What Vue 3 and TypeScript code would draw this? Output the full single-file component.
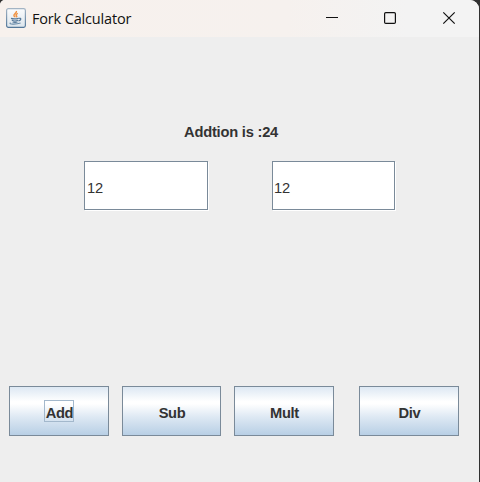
<script setup lang="ts">
import { ref } from 'vue'

type Operation = 'Add' | 'Sub' | 'Mult' | 'Div'

const first = ref('12')
const second = ref('12')
const result = ref('Addtion is :24')
const focused = ref<Operation>('Add')
const operations: Operation[] = ['Add', 'Sub', 'Mult', 'Div']

function calculate(operation: Operation): void {
  const a = Number(first.value)
  const b = Number(second.value)
  focused.value = operation
  if (operation === 'Add') result.value = `Addtion is :${a + b}`
  else if (operation === 'Sub') result.value = `Subtraction is :${a - b}`
  else if (operation === 'Mult') result.value = `Multiplication is :${a * b}`
  else result.value = `Division is :${a / b}`
}
</script>

<template>
  <main class="window">
    <header class="titlebar">
      <svg class="java" width="20" height="20" viewBox="0 0 20 20">
        <defs>
          <linearGradient id="tile" x1="0" y1="0" x2="0" y2="1">
            <stop offset="0" stop-color="#fbfcfd" />
            <stop offset="1" stop-color="#dce5ec" />
          </linearGradient>
          <linearGradient id="edge" x1="0" y1="0" x2="0" y2="1">
            <stop offset="0" stop-color="#a3b4c4" />
            <stop offset="1" stop-color="#54789a" />
          </linearGradient>
        </defs>
        <rect x=".6" y=".6" width="18.8" height="18.8" rx="1.8" fill="url(#tile)" stroke="url(#edge)" stroke-width="1.2" />
        <path d="M10.4 3c.8 2-3.4 3-2.4 4.7.3.7 1 1 1 1.6M11.8 5.4c-2.5 1-1.8 1.8-1.2 2.5.4.5.1 1-.3 1.4" fill="none" stroke="#ef9140" stroke-width="1.5" />
        <path d="M5 10.4c1.8.6 5.4.5 7.6 0M5.8 12.3c1.6.7 4.6.7 6.2 0M6.6 14c1.4.5 3.5.5 4.9 0M12.8 10.3c2.8-.5 2.6 1.8-.3 2.6" fill="none" stroke="#56799b" stroke-width="1.2" />
        <path d="M4.6 14.8c-2.6 1.5 5 1.9 10 .2" fill="none" stroke="#6c8dab" stroke-width="1.2" />
      </svg>
      <h1 class="title">Fork Calculator</h1>
      <nav class="controls">
        <button aria-label="Minimize">
          <svg width="14" height="14" viewBox="0 0 14 14"><path d="M1 6.5h12" /></svg>
        </button>
        <button aria-label="Maximize">
          <svg width="14" height="14" viewBox="0 0 14 14"><rect x="1.6" y="1.6" width="10.8" height="10.8" rx="1.2" /></svg>
        </button>
        <button aria-label="Close">
          <svg width="14" height="14" viewBox="0 0 14 14"><path d="M1.3 1.3l11.4 11.4M12.7 1.3L1.3 12.7" /></svg>
        </button>
      </nav>
    </header>
    <section class="content">
      <output class="result">{{ result }}</output>
      <div class="fields">
        <div class="field"><input v-model="first" aria-label="First number" /></div>
        <div class="field"><input v-model="second" aria-label="Second number" /></div>
      </div>
      <div class="actions">
        <button
          v-for="operation in operations"
          :key="operation"
          class="action"
          :class="[operation.toLowerCase(), { focused: focused === operation }]"
          @click="calculate(operation)"
        >
          <span>{{ operation }}</span>
        </button>
      </div>
    </section>
  </main>
</template>

<style>
body {
  background: #303030;
}
</style>

<style scoped>
.window {
  box-sizing: border-box;
  width: 479px;
  height: 482px;
  overflow: hidden;
  background: #eee;
  border-radius: 5px 9px 0 0;
  font-family: "Liberation Sans", Arial, sans-serif;
}
.titlebar {
  display: flex;
  align-items: center;
  height: 37px;
  padding-left: 6px;
  background: linear-gradient(90deg, #f7f1ed 0%, #f6f1ee 60%, #f3f3f3 85%);
}
.java {
  flex: none;
  margin-top: -2px;
}
.title {
  margin: 0 0 0 6px;
  font: 400 14.5px/20px "Open Sans", "Noto Sans", sans-serif;
  letter-spacing: -0.17px;
  color: #111;
  white-space: nowrap;
}
.controls {
  display: flex;
  margin: 0 1px 0 auto;
}
.controls button {
  display: flex;
  align-items: center;
  justify-content: center;
  width: 58.5px;
  height: 37px;
  padding: 0 0 1px;
  border: 0;
  background: none;
}
.controls svg {
  fill: none;
  stroke: #111;
  stroke-width: 1.2;
}
.content {
  display: flex;
  flex-direction: column;
  height: 445px;
  color: #333;
}
.result {
  margin: 85px 0 0 184px;
  font-size: 14.7px;
  font-weight: bold;
  line-height: 20px;
  letter-spacing: -0.22px;
  white-space: nowrap;
}
.fields {
  display: flex;
  gap: 64px;
  margin: 19px 0 0 84px;
}
.field {
  box-sizing: border-box;
  width: 124px;
  height: 49px;
  border: 1px solid #7a8a99;
  background: #fff;
  box-shadow: 1px 1px 0 #fff;
}
.field + .field {
  width: 123px;
}
.field input {
  box-sizing: border-box;
  width: 100%;
  height: 47px;
  padding: 4px 2px 0;
  border: 0;
  outline: 0;
  background: transparent;
  color: #333;
  font: 14.7px "Liberation Sans", Arial, sans-serif;
  letter-spacing: -0.2px;
}
.field + .field input {
  padding-left: 1px;
}
.actions {
  display: flex;
  margin: 176px 0 0 9px;
}
.action {
  display: flex;
  align-items: center;
  justify-content: center;
  box-sizing: border-box;
  width: 100px;
  height: 50px;
  padding: 0;
  border: 1px solid #7a8a99;
  background: linear-gradient(#dde8f3 0%, #fff 30%, #fff 35%, #dde8f3 63%, #b8cfe5 100%);
  color: #333;
  font: bold 14.7px/16px "Liberation Sans", Arial, sans-serif;
  letter-spacing: -0.35px;
}
.action.sub {
  width: 99px;
  margin-left: 13px;
}
.action.mult {
  margin-left: 13px;
}
.action.div {
  margin-left: 25px;
}
.action span {
  padding: 4px 0 0 1px;
  border: 1px solid transparent;
}
.action.focused span {
  border-color: #a3b8cc;
}
</style>
